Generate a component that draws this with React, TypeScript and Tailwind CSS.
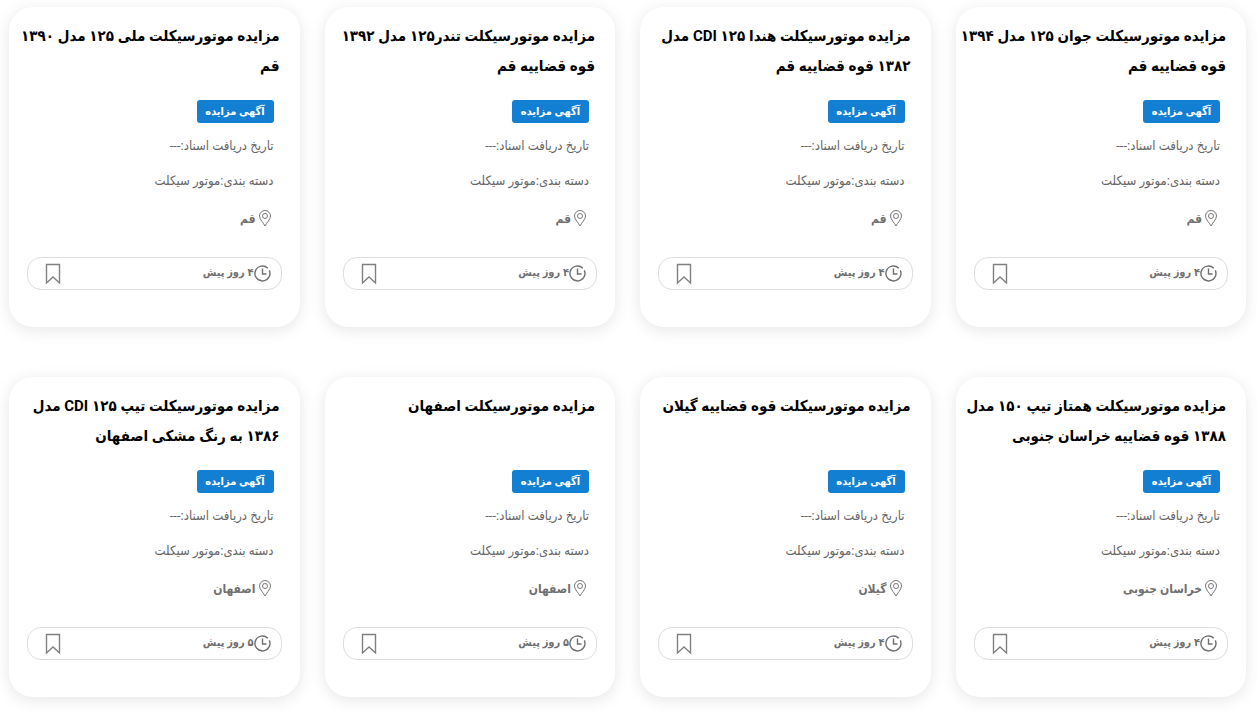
type Auction = {
  title: string[];
  city: string;
  time: string;
};

const auctions: Auction[] = [
  { title: ["مزایده موتورسیکلت جوان ۱۲۵ مدل ۱۳۹۴", "قوه قضاییه قم"], city: "قم", time: "۴ روز پیش" },
  { title: ["مزایده موتورسیکلت هندا CDI ۱۲۵ مدل", "۱۳۸۲ قوه قضاییه قم"], city: "قم", time: "۴ روز پیش" },
  { title: ["مزایده موتورسیکلت تندر۱۲۵ مدل ۱۳۹۲", "قوه قضاییه قم"], city: "قم", time: "۴ روز پیش" },
  { title: ["مزایده موتورسیکلت ملی ۱۲۵ مدل ۱۳۹۰", "قم"], city: "قم", time: "۴ روز پیش" },
  { title: ["مزایده موتورسیکلت همتاز تیپ ۱۵۰ مدل", "۱۳۸۸ قوه قضاییه خراسان جنوبی"], city: "خراسان جنوبی", time: "۴ روز پیش" },
  { title: ["مزایده موتورسیکلت قوه قضاییه گیلان"], city: "گیلان", time: "۴ روز پیش" },
  { title: ["مزایده موتورسیکلت اصفهان"], city: "اصفهان", time: "۵ روز پیش" },
  { title: ["مزایده موتورسیکلت تیپ CDI ۱۲۵ مدل", "۱۳۸۶ به رنگ مشکی اصفهان"], city: "اصفهان", time: "۵ روز پیش" },
];

function PinIcon() {
  return (
    <svg width="13" height="17" viewBox="0 0 13 17" fill="none" stroke="#777" aria-hidden="true">
      <path d="M6 16C4.800 13.200.5 9.600.5 6a5.500 5.500 0 0 1 11 0c0 3.600-4.300 7.200-5.500 10Z" />
      <circle cx="6" cy="6" r="2.500" />
    </svg>
  );
}

function ClockIcon() {
  return (
    <svg width="17" height="17" viewBox="0 0 17 17" fill="none" stroke="#707070" strokeWidth="1.400" aria-hidden="true">
      <path d="M13.800 3.200A7.500 7.500 0 1 0 15.300 5.400" />
      <path d="M8.500 3.500v5.500h4" />
    </svg>
  );
}

function BookmarkIcon() {
  return (
    <svg width="16" height="22" viewBox="0 0 16 22" fill="none" stroke="#808080" strokeWidth="1.400" aria-hidden="true">
      <path d="M1.500 1.500h13v18.500L8 14l-6.500 6Z" />
    </svg>
  );
}

function AuctionCard({ auction }: { auction: Auction }) {
  return (
    <article className="flex flex-col rounded-3xl bg-white px-[18px] pt-[14px] pb-[37px] shadow-[0_3px_16px_rgba(0,0,0,0.1)]">
      <h2 className="min-h-[60px] px-0.5 text-[15px] leading-[30px] font-bold whitespace-nowrap text-black">
        {auction.title.map((line) => (
          <span key={line} className="block">
            {line}
          </span>
        ))}
      </h2>
      <div className="flex flex-col items-start px-2 pt-[19px] text-[13px] text-[#666]">
        <span className="flex h-[23px] w-[77px] items-center justify-center rounded-[3px] bg-[#127fd2] pt-0.5 text-[11px] font-bold whitespace-nowrap text-white">
          آگهی مزایده
        </span>
        <p className="mt-[11px] leading-6">تاریخ دریافت اسناد:---</p>
        <p className="mt-[11px] leading-6">دسته بندی:موتور سیکلت</p>
        <div className="mt-[13px] flex h-6 items-center gap-[3px] px-0.5 text-[12px] font-bold text-[#707070]">
          <PinIcon />
          <span className="pt-0.5">{auction.city}</span>
        </div>
      </div>
      <div className="mt-[27px] flex h-[33px] items-center justify-between rounded-[14px] border border-[#ddd] pr-[10px] pl-[17px]">
        <p className="flex items-center text-[11px] font-bold text-[#707070]">
          <ClockIcon />
          {auction.time}
        </p>
        <button type="button" aria-label="نشان کردن">
          <BookmarkIcon />
        </button>
      </div>
    </article>
  );
}

export default function App() {
  return (
    <main
      dir="rtl"
      lang="fa"
      className="grid grid-cols-4 gap-x-[25px] gap-y-[50px] bg-white pt-[7px] pr-[11px] pb-[15px] pl-[9px] font-['Roboto','DejaVu_Sans_Condensed','DejaVu_Sans',sans-serif]"
    >
      {auctions.map((auction) => (
        <AuctionCard key={auction.title.join(" ")} auction={auction} />
      ))}
    </main>
  );
}
